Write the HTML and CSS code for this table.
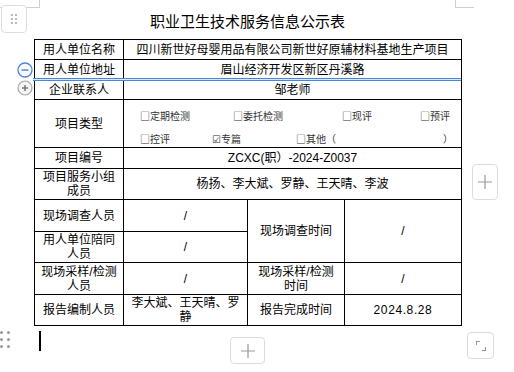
FILE: index.html
```html
<!DOCTYPE html>
<html lang="zh">
<head>
<meta charset="utf-8">
<link rel="stylesheet" href="styles.css">
</head>
<body>
<div class="page">
  <h1 class="title">职业卫生技术服务信息公示表</h1>
  <table class="info">
    <colgroup><col class="c1"><col class="c2"><col class="c3"><col class="c4"></colgroup>
    <tr class="h20"><td>用人单位名称</td><td colspan="3">四川新世好母婴用品有限公司新世好原辅材料基地生产项目</td></tr>
    <tr class="h20"><td>用人单位地址</td><td colspan="3">眉山经济开发区新区丹溪路</td></tr>
    <tr class="h20"><td>企业联系人</td><td colspan="3">邹老师</td></tr>
    <tr class="h48"><td>项目类型</td><td colspan="3" class="types">
      <div class="trow"><span class="w93">□定期检测</span><span class="w109">□委托检测</span><span class="w78">□现评</span><span>□预评</span></div>
      <div class="trow"><span class="w72">□控评</span><span class="w84"><span class="chk">☑</span>专篇</span><span class="w147">□其他（</span><span>）</span></div>
    </td></tr>
    <tr class="h21"><td>项目编号</td><td colspan="3">ZCXC(职）-2024-Z0037</td></tr>
    <tr class="h31"><td>项目服务小组<br>成员</td><td colspan="3">杨扬、李大斌、罗静、王天晴、李波</td></tr>
    <tr class="h32"><td>现场调查人员</td><td>/</td><td rowspan="2">现场调查时间</td><td rowspan="2">/</td></tr>
    <tr class="h31"><td>用人单位陪同<br>人员</td><td>/</td></tr>
    <tr class="h32"><td>现场采样/检测<br>人员</td><td>/</td><td>现场采样/检测<br>时间</td><td>/</td></tr>
    <tr class="h31"><td>报告编制人员</td><td>李大斌、王天晴、罗<br>静</td><td>报告完成时间</td><td class="date">2024.8.28</td></tr>
  </table>
</div>

<div class="crop crop-tl"></div>
<div class="crop crop-tr"></div>
<div class="handle-box"><span class="dots"><i></i><i></i><i></i><i></i><i></i><i></i></span></div>
<div class="sel-line"></div>
<svg class="row-minus" width="16" height="16" viewBox="0 0 16 16"><circle cx="8" cy="8" r="7" fill="#fff" stroke="#4a86d8" stroke-width="1.3"/><line x1="4.5" y1="8" x2="11.5" y2="8" stroke="#4a86d8" stroke-width="1.5"/></svg>
<svg class="row-plus" width="16" height="16" viewBox="0 0 16 16"><circle cx="8" cy="8" r="7" fill="#f4f4f4" stroke="#a8a8a8" stroke-width="1.2"/><line x1="5" y1="8" x2="11" y2="8" stroke="#777" stroke-width="1.5"/><line x1="8" y1="5" x2="8" y2="11" stroke="#777" stroke-width="1.5"/></svg>
<div class="btn btn-right"><svg width="14" height="14" viewBox="0 0 14 14"><path d="M7 0v14M0 7h14" stroke="#999" stroke-width="1.2"/></svg></div>
<div class="btn btn-bottom"><svg width="14" height="14" viewBox="0 0 14 14"><path d="M7 0v14M0 7h14" stroke="#999" stroke-width="1.2"/></svg></div>
<div class="btn btn-resize"><svg width="10" height="10" viewBox="0 0 10 10"><path d="M0 0h4v1H1v3H0z M10 10H6V9h3V6h1z" fill="#999"/></svg></div>
<div class="grip"><i></i><i></i><i></i><i></i><i></i><i></i></div>
<div class="caret"></div>
</body>
</html>
```

FILE: styles.css
```css
html, body {
  margin: 0;
  padding: 0;
  background: #fff;
}
body {
  width: 514px;
  height: 372px;
  overflow: hidden;
  position: relative;
  font-family: "Noto Sans CJK SC", "Noto Sans", sans-serif;
  color: #000;
}
.page {
  padding-left: 34px;
}
.title {
  margin: 0;
  width: 427px;
  height: 39px;
  box-sizing: border-box;
  padding-top: 11px;
  font-size: 15px;
  font-weight: normal;
  line-height: 20px;
  text-align: center;
  letter-spacing: 0;
}
.info {
  border-collapse: collapse;
  table-layout: fixed;
  width: 427px;
  font-family: "Liberation Sans", "Noto Sans CJK SC", sans-serif;
  font-size: 12px;
  line-height: 14px;
}
.c1 { width: 89px; }
.c2 { width: 124px; }
.c3 { width: 97px; }
.c4 { width: 117px; }
.info td {
  border: 1px solid #000;
  padding: 0 5px;
  text-align: center;
  vertical-align: middle;
  white-space: nowrap;
}
.h20 td { height: 19px; }
.h21 td { height: 20px; }
.h31 td { height: 30px; }
.h32 td { height: 31px; }
.h48 td { height: 47px; }
.info td.types {
  padding: 0;
  text-align: left;
  vertical-align: top;
  font-family: "Noto Sans CJK SC", sans-serif;
  font-size: 10px;
  color: #333;
}
.trow {
  display: flex;
  padding-left: 16px;
  line-height: 12px;
}
.trow:first-child { margin-top: 10px; }
.trow + .trow { margin-top: 11px; }
.trow span { flex: none; }
.chk { font-family: "DejaVu Sans", sans-serif; font-size: 10px; }
.w93 { width: 93px; }
.w109 { width: 109px; }
.w78 { width: 78px; }
.w72 { width: 72px; }
.w84 { width: 84px; }
.w147 { width: 147px; }
.date { letter-spacing: 0.6px; }

/* editor chrome overlays */
.crop { position: absolute; border-color: #cfcfcf; border-style: solid; }
.crop-tl { left: 0; top: 0; width: 39px; height: 7px; border-width: 0 1px 1px 0; }
.crop-tr { left: 455px; top: 0; width: 18px; height: 7px; border-width: 0 0 1px 1px; }
.handle-box {
  position: absolute;
  left: 1px; top: 5px;
  width: 24px; height: 26px;
  border: 1px solid #dedede;
  border-radius: 4px;
  background: #fff;
  display: flex;
  align-items: center;
  justify-content: center;
}
.dots {
  display: grid;
  grid-template-columns: 2px 2px;
  gap: 2px 2px;
}
.dots i { width: 2px; height: 2px; background: #b8b8b8; }
.sel-line {
  position: absolute;
  left: 33px; top: 78px;
  width: 428px; height: 1px;
  border-top: 1px solid #4a86d8;
  border-bottom: 1px solid #4a86d8;
  background: #dbe7f8;
}
.row-minus { position: absolute; left: 17px; top: 62px; }
.row-plus { position: absolute; left: 17px; top: 80px; }
.btn {
  position: absolute;
  border: 1px solid #dcdcdc;
  border-radius: 4px;
  background: #fff;
  display: flex;
  align-items: center;
  justify-content: center;
  box-sizing: border-box;
}
.btn-right { left: 472px; top: 164px; width: 26px; height: 36px; }
.btn-bottom { left: 230px; top: 337px; width: 35px; height: 27px; }
.btn-resize { left: 467px; top: 332px; width: 27px; height: 27px; }
.grip {
  position: absolute;
  left: 0; top: 331px;
  display: grid;
  grid-template-columns: 3px 3px;
  gap: 4px 4px;
}
.grip i { width: 3px; height: 3px; border-radius: 50%; background: #999; }
.caret {
  position: absolute;
  left: 39px; top: 331px;
  width: 2px; height: 20px;
  background: #000;
}
```
